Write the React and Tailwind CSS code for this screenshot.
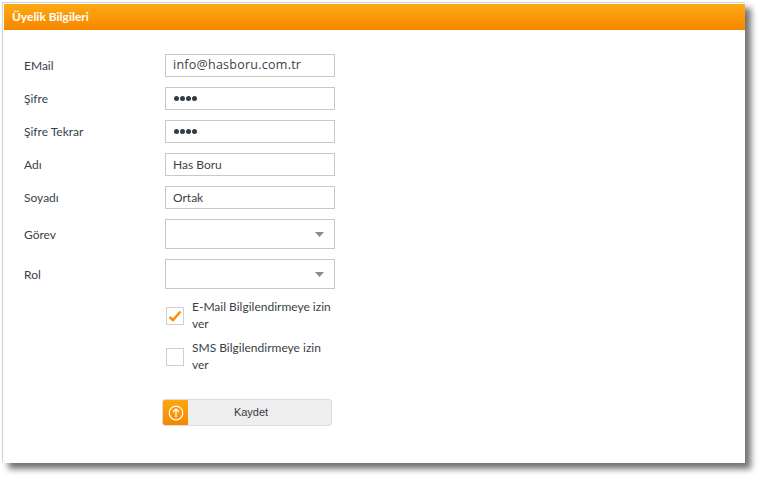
import React from "react";

function Label({ children, lower }) {
  return <div className={lower ? "w-[141px] text-[12px] text-[#3a3f47] pt-[1px]" : "w-[141px] text-[12px] text-[#3a3f47]"}>{children}</div>;
}

function TextRow({ label, value, dots, wide }) {
  return (
    <div className="flex items-center h-[23px] mb-[10px]">
      <Label>{label}</Label>
      <div className={wide
        ? "w-[170px] h-[23px] border border-[#c8c8c8] bg-white pl-[7px] flex items-center font-['Open_Sans',sans-serif] text-[12.5px] tracking-[0.25px] text-[#3a3f47]"
        : "w-[170px] h-[23px] border border-[#c8c8c8] bg-white pl-[7px] flex items-center text-[12px] text-[#3a3f47]"}>
        {dots ? (
          <div className="flex gap-[1px] ml-[1px]">
            <span className="w-[5px] h-[5px] rounded-full bg-[#333b45]" />
            <span className="w-[5px] h-[5px] rounded-full bg-[#333b45]" />
            <span className="w-[5px] h-[5px] rounded-full bg-[#333b45]" />
            <span className="w-[5px] h-[5px] rounded-full bg-[#333b45]" />
          </div>
        ) : (
          value
        )}
      </div>
    </div>
  );
}

function SelectRow({ label }) {
  return (
    <div className="flex items-center h-[30px] mb-[10px]">
      <Label lower>{label}</Label>
      <div className="w-[170px] h-[30px] border border-[#c8c8c8] bg-white flex items-center justify-end pr-[10px]">
        <svg width="9" height="5" viewBox="0 0 9 5">
          <path d="M0 0H9L4.5 5Z" fill="#8a8a8a" />
        </svg>
      </div>
    </div>
  );
}

function CheckRow({ checked, children }) {
  return (
    <div className="flex items-center ml-[142px] w-[170px] h-[41px] text-[12px] leading-[17px] text-[#3a3f47]">
      <div className="w-[18px] h-[18px] border border-[#cfcfcf] bg-white shrink-0 flex items-center justify-center mr-[8px] mt-[2px]">
        {checked && (
          <svg width="14" height="12" viewBox="0 0 14 12">
            <path d="M1.5 7L5 10L12.5 1.5" fill="none" stroke="#f98a0a" strokeWidth="2.4" />
          </svg>
        )}
      </div>
      <div className="w-[144px]">{children}</div>
    </div>
  );
}

export default function App() {
  return (
    <div className="w-[759px] h-[478px] bg-white pt-[2px] pl-[2px] font-['Lato','Open_Sans',sans-serif]">
      <div className="w-[743px] h-[461px] bg-white border-l border-t border-[#d0d0d0] rounded-bl-[3px] shadow-[6px_6px_6px_rgba(0,0,0,0.55)] pt-[1px]">
        <div className="h-[26px] ml-[1px] bg-gradient-to-b from-[#fcaa12] to-[#f68600] text-white text-[12px] font-bold flex items-center pl-[8px]">
          Üyelik Bilgileri
        </div>
        <div className="pt-[24px] pl-[21px]">
          <TextRow label="EMail" value="info@hasboru.com.tr" wide />
          <TextRow label="Şifre" dots />
          <TextRow label="Şifre Tekrar" dots />
          <TextRow label="Adı" value="Has Boru" />
          <TextRow label="Soyadı" value="Ortak" />
          <SelectRow label="Görev" />
          <SelectRow label="Rol" />
          <div className="-mt-[5px]">
            <CheckRow checked>E-Mail Bilgilendirmeye izin ver</CheckRow>
            <CheckRow>SMS Bilgilendirmeye izin ver</CheckRow>
          </div>
          <div className="mt-[23px] ml-[138px] w-[170px] h-[27px] flex rounded-[3px] border border-[#dcdcdc] bg-[#eeeeee] overflow-hidden font-['Liberation_Sans',sans-serif] text-[11px] text-[#333b45]">
            <div className="w-[25px] h-full bg-gradient-to-b from-[#fca80f] to-[#f68600] flex items-center justify-center">
              <svg width="16" height="16" viewBox="0 0 16 16" fill="none" stroke="#fff" strokeWidth="1.2">
                <circle cx="8" cy="8" r="6.8" />
                <path d="M8 12.5V4M5 7L8 4L11 7" />
              </svg>
            </div>
            <div className="flex-1 flex items-center justify-center pr-[17px]">Kaydet</div>
          </div>
        </div>
      </div>
    </div>
  );
}
